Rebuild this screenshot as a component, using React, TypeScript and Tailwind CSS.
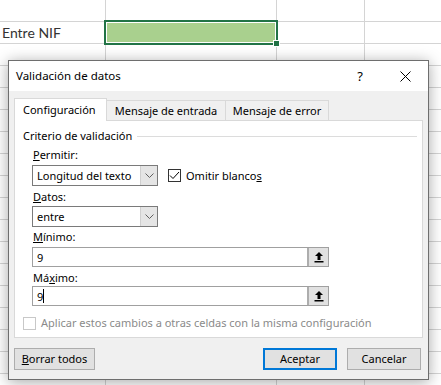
import React from 'react';

const ui = { fontFamily: '"Noto Sans", "Open Sans", sans-serif' };

const rows = Array.from({ length: 18 });

const Chevron = () => (
  <svg width="9" height="5" viewBox="0 0 9 5" fill="none">
    <path d="M0.5 0.5 L4.5 4.5 L8.5 0.5" stroke="#606060" strokeWidth="1" />
  </svg>
);

const RefIcon = () => (
  <svg width="10" height="12" viewBox="0 0 10 12">
    <path d="M5 1 L9 5 L6.5 5 L6.5 9 L3.5 9 L3.5 5 L1 5 Z" fill="#000" />
    <rect x="0.5" y="10" width="9" height="1.5" fill="#000" />
  </svg>
);

const Select = ({ value }: { value: string }) => (
  <div className="flex w-[126px] h-[21px] border border-[#7a7a7a] bg-white">
    <div className="flex-1 flex items-center pl-[4px] leading-none">{value}</div>
    <div className="w-[17px] flex items-center justify-center bg-[#e5e5e5] border-l border-[#cfcfcf]">
      <Chevron />
    </div>
  </div>
);

const RefInput = ({ value, caret }: { value: string; caret?: boolean }) => (
  <div className="flex w-[297px] h-[20px] border border-[#a0a0a0] bg-white">
    <div className="flex-1 flex items-center pl-[4px] leading-none">
      {value}
      {caret && <span className="inline-block w-px h-[14px] bg-black" />}
    </div>
    <div className="w-[21px] flex items-center justify-center bg-[#e1e1e1] border-l-2 border-[#adadad]">
      <RefIcon />
    </div>
  </div>
);

export default function App() {
  return (
    <div className="relative w-[441px] h-[385px] bg-white overflow-hidden" style={ui}>
      {/* sheet grid */}
      <div className="flex flex-col">
        {rows.map((_, i) => (
          <div key={i} className="flex h-[22px] border-b border-[#d4d4d4]">
            <div className="w-[106px] border-r border-[#d4d4d4] flex items-center pl-[2px]">
              {i === 1 && (
                <span className="text-[14px] text-[#333]" style={{ fontFamily: 'Lato, sans-serif' }}>
                  Entre NIF
                </span>
              )}
            </div>
            <div className="w-[171px] border-r border-[#d4d4d4]" />
            <div className="w-[88px] border-r border-[#d4d4d4]" />
            <div className="flex-1" />
          </div>
        ))}
      </div>

      {/* selected cell */}
      <div className="absolute left-[104px] top-[20px] w-[174px] h-[25px] border-2 border-[#217346] p-px">
        <div className="w-full h-full bg-[#a9d08e]" />
      </div>
      <div className="absolute left-[273px] top-[40px] w-[7px] h-[7px] bg-[#217346] border border-white" />

      {/* dialog */}
      <div className="absolute left-[8px] top-[60px] w-[421px] h-[320px] border border-[#6e6e6e] bg-[#f0f0f0] shadow-[0_2px_14px_rgba(0,0,0,0.35)] flex flex-col text-black text-[11px] leading-[16px]">
        <div className="h-[30px] bg-white flex items-center pl-[7px] pr-[17px] text-[11.5px]">
          <span className="flex-1">Validación de datos</span>
          <span className="w-[20px] text-center mr-[30px] text-[13px]">?</span>
          <svg width="11" height="11" viewBox="0 0 11 11">
            <path d="M0.5 0.5 L10.5 10.5 M10.5 0.5 L0.5 10.5" stroke="#000" strokeWidth="1" />
          </svg>
        </div>

        <div className="flex-1 flex flex-col px-[5px] pt-[7px]">
          {/* tabs */}
          <div className="flex items-end h-[22px] relative z-10">
            <div className="h-[23px] w-[93px] bg-white border border-b-0 border-[#d9d9d9] flex items-center pl-[8px] -mb-px">
              Configuración
            </div>
            <div className="h-[20px] w-[119px] border border-l-0 border-b-0 border-[#d9d9d9] flex items-center justify-center">
              Mensaje de entrada
            </div>
            <div className="h-[20px] w-[103px] border border-l-0 border-b-0 border-[#d9d9d9] flex items-center justify-center">
              Mensaje de error
            </div>
          </div>

          {/* panel */}
          <div className="h-[218px] bg-white border border-[#d9d9d9] flex flex-col">
            <div className="flex items-center mt-[7px] pl-[8px] pr-[5px]">
              <span>Criterio de validación</span>
              <div className="flex-1 h-px bg-[#dcdcdc] ml-[5px]" />
            </div>

            <div className="pl-[17px] flex flex-col">
              <div className="mt-[3px] pl-px">
                <span className="underline">P</span>ermitir:
              </div>
              <div className="mt-[2px] flex items-center">
                <Select value="Longitud del texto" />
                <div className="ml-[10px] w-[13px] h-[13px] border border-[#333] flex items-center justify-center">
                  <svg width="11" height="9" viewBox="0 0 11 9">
                    <path d="M1 4.5 L4 7.5 L10 1" fill="none" stroke="#000" strokeWidth="1" />
                  </svg>
                </div>
                <span className="ml-[5px]">
                  Omitir blanco<span className="underline">s</span>
                </span>
              </div>

              <div className="mt-[3px] pl-px">
                <span className="underline">D</span>atos:
              </div>
              <div className="mt-px">
                <Select value="entre" />
              </div>

              <div className="mt-[2px] pl-px">
                <span className="underline">M</span>ínimo:
              </div>
              <div className="mt-[2px]">
                <RefInput value="9" />
              </div>

              <div className="mt-[3px] pl-px">
                Má<span className="underline">x</span>imo:
              </div>
              <div>
                <RefInput value="9" caret />
              </div>
            </div>

            <div className="mt-[9px] pl-[8px] flex items-center text-[#8a8a8a]">
              <div className="w-[13px] h-[13px] border border-[#c8c8c8] bg-white" />
              <span className="ml-[5px]">Aplicar estos cambios a otras celdas con la misma configuración</span>
            </div>
          </div>

          {/* buttons */}
          <div className="mt-[10px] flex items-center">
            <div className="w-[81px] h-[22px] bg-[#e1e1e1] border border-[#adadad] flex items-center justify-center">
              <span>
                <span className="underline">B</span>orrar todos
              </span>
            </div>
            <div className="flex-1" />
            <div className="w-[74px] h-[22px] bg-[#e1e1e1] border-2 border-[#0078d7] flex items-center justify-center">
              Aceptar
            </div>
            <div className="w-[74px] h-[22px] ml-[10px] mr-[2px] bg-[#e1e1e1] border border-[#adadad] flex items-center justify-center">
              Cancelar
            </div>
          </div>
        </div>
      </div>
    </div>
  );
}
